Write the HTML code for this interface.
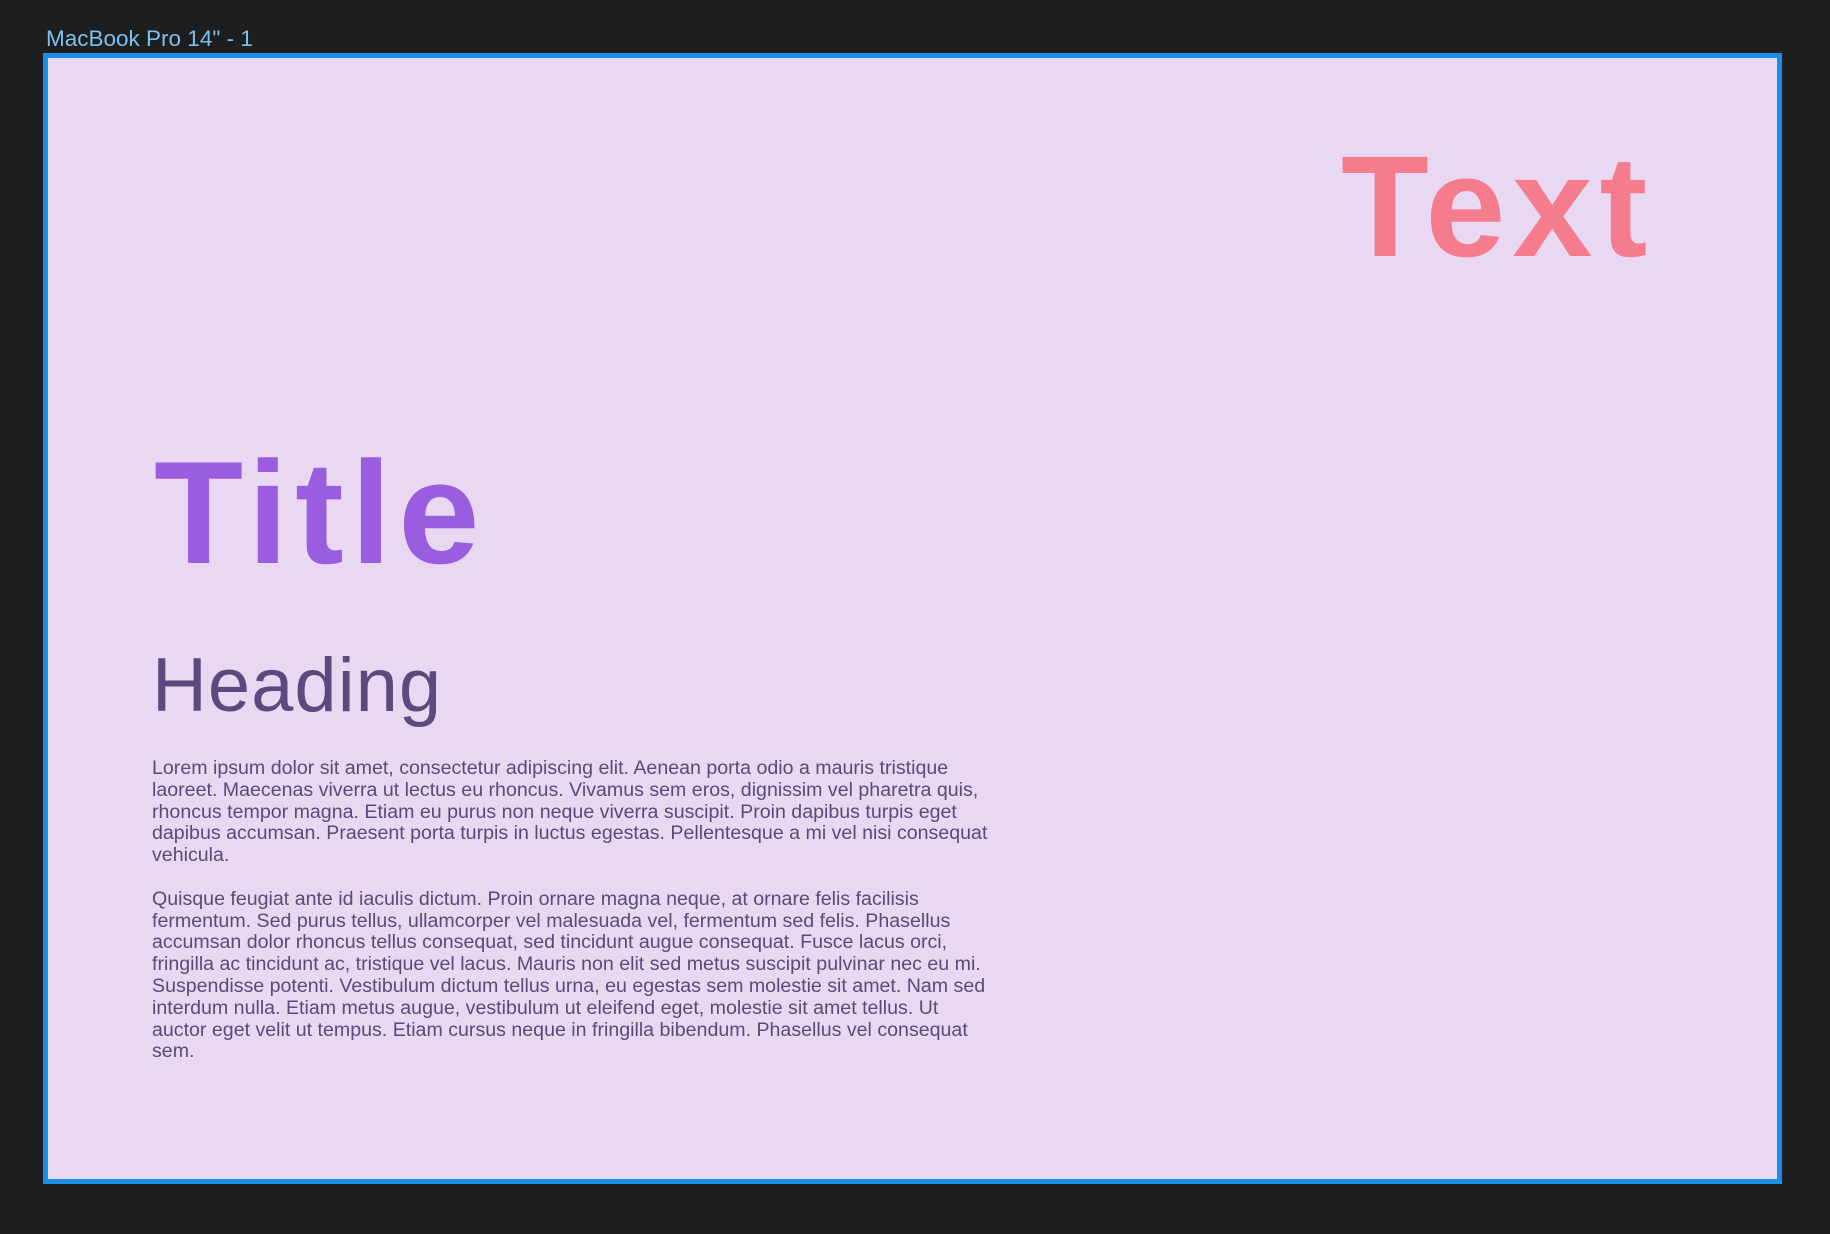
<!DOCTYPE html>
<html><head><meta charset="utf-8"><style>
html,body{margin:0;padding:0;}
body{width:1830px;height:1234px;background:#1e1e1e;position:relative;overflow:hidden;font-family:"Liberation Sans",sans-serif;}
.lbl{position:absolute;left:46px;top:26px;font-size:22.5px;color:#7cc0ef;white-space:nowrap;}
.frame{position:absolute;left:43px;top:53px;width:1729px;height:1121px;border:5px solid #1a8fe8;background:#e8d8f2;}
.abs{position:absolute;white-space:nowrap;}
.text{left:1293px;top:77px;font-size:144px;font-weight:bold;color:#f47c8c;letter-spacing:7px;line-height:1;}
.title{left:106px;top:382px;font-size:146px;font-weight:bold;color:#9b5de0;letter-spacing:7px;line-height:1;}
.heading{left:104px;top:590px;font-size:76px;color:#5b4a7e;letter-spacing:1px;line-height:1;}
.body{left:104px;top:700px;font-size:19.6px;line-height:21.8px;color:#5a4a7a;}
.body p{margin:0 0 21.8px 0;}
</style></head><body>
<div class="lbl">MacBook Pro 14" - 1</div>
<div class="frame">
<div class="abs text">Text</div>
<div class="abs title">Title</div>
<div class="abs heading">Heading</div>
<div class="abs body">
<p>Lorem ipsum dolor sit amet, consectetur adipiscing elit. Aenean porta odio a mauris tristique<br>laoreet. Maecenas viverra ut lectus eu rhoncus. Vivamus sem eros, dignissim vel pharetra quis,<br>rhoncus tempor magna. Etiam eu purus non neque viverra suscipit. Proin dapibus turpis eget<br>dapibus accumsan. Praesent porta turpis in luctus egestas. Pellentesque a mi vel nisi consequat<br>vehicula.</p>
<p>Quisque feugiat ante id iaculis dictum. Proin ornare magna neque, at ornare felis facilisis<br>fermentum. Sed purus tellus, ullamcorper vel malesuada vel, fermentum sed felis. Phasellus<br>accumsan dolor rhoncus tellus consequat, sed tincidunt augue consequat. Fusce lacus orci,<br>fringilla ac tincidunt ac, tristique vel lacus. Mauris non elit sed metus suscipit pulvinar nec eu mi.<br>Suspendisse potenti. Vestibulum dictum tellus urna, eu egestas sem molestie sit amet. Nam sed<br>interdum nulla. Etiam metus augue, vestibulum ut eleifend eget, molestie sit amet tellus. Ut<br>auctor eget velit ut tempus. Etiam cursus neque in fringilla bibendum. Phasellus vel consequat<br>sem.</p>
</div>
</div>
</body></html>
